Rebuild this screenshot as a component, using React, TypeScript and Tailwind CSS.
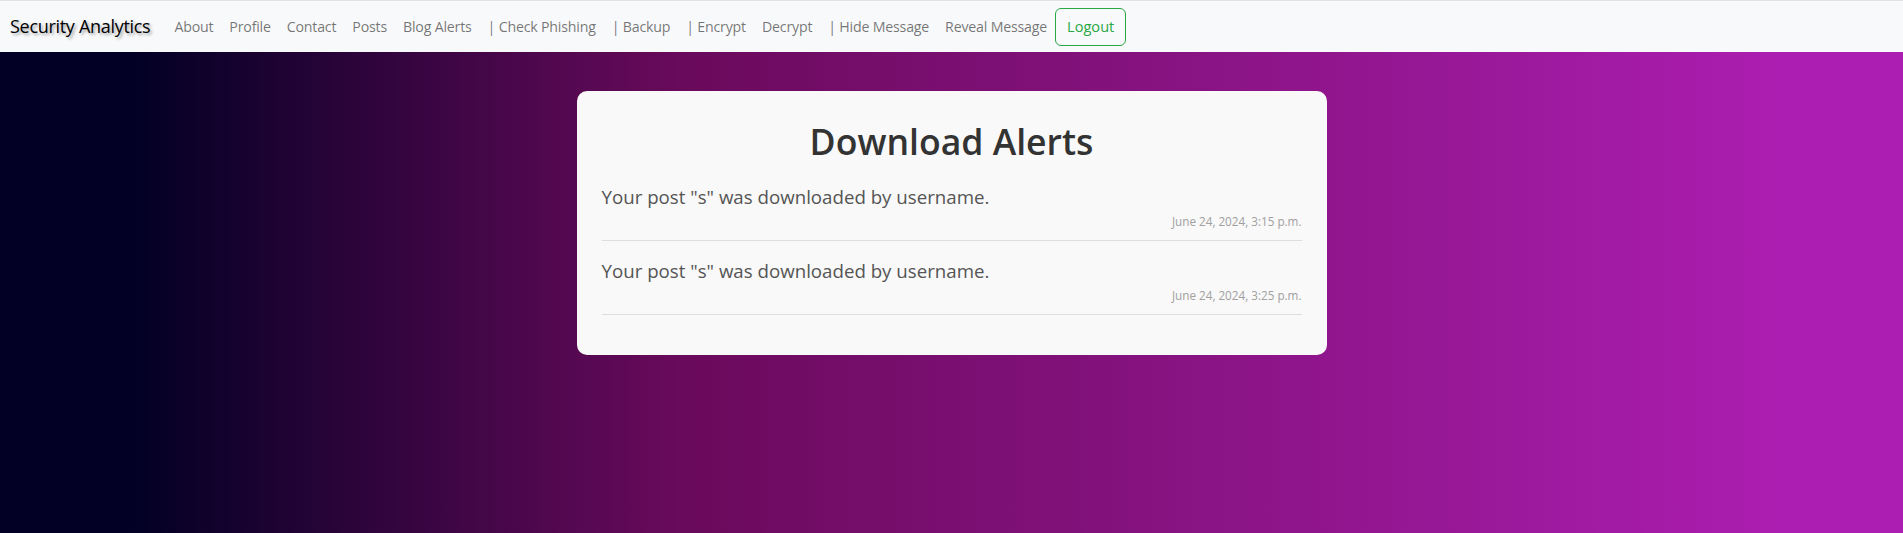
import React from 'react';

const links = [
  'About',
  'Profile',
  'Contact',
  'Posts',
  'Blog Alerts',
  '| Check Phishing',
  '| Backup',
  '| Encrypt',
  'Decrypt',
  '| Hide Message',
  'Reveal Message',
];

const alerts = [
  { text: 'Your post "s" was downloaded by username.', time: 'June 24, 2024, 3:15 p.m.' },
  { text: 'Your post "s" was downloaded by username.', time: 'June 24, 2024, 3:25 p.m.' },
];

export default function App() {
  return (
    <div
      className="min-h-[533px] bg-[linear-gradient(to_right,#020024_7%,#6a0a5c_36%,#ac1eb1_94%)]"
      style={{ fontFamily: '"Open Sans", "Noto Sans", sans-serif' }}
    >
      {/* Navbar */}
      <nav className="h-[52px] bg-[#f8f9fa] border-t border-[#e2e2e2] flex items-center pl-[10px]">
        <span className="text-[18px] tracking-[-0.3px] text-black mr-4 [text-shadow:2px_2px_3px_rgba(0,0,0,0.35)]">
          Security Analytics
        </span>
        <div className="flex items-center">
          {links.map((l) => (
            <a key={l} href="#" className="px-2 text-[14.2px] tracking-[-0.2px] leading-6 text-black/55 whitespace-nowrap">
              {l}
            </a>
          ))}
          <button className="h-[38px] px-[11px] rounded-md border border-[#28a745] text-[#28a745] text-[14.6px]">
            Logout
          </button>
        </div>
      </nav>

      {/* Alerts card */}
      <div className="w-[750px] mx-auto mt-[39px] bg-[#f9f9f9] rounded-[10px] px-[25px] pt-[26px] pb-10">
        <h1 className="text-center text-[35.6px] leading-[48px] font-semibold text-[#333]">Download Alerts</h1>
        <ul className="mt-[2px]">
          {alerts.map((a, i) => (
            <li key={i} className="pt-[15px] pb-[10px] border-b border-[#dedede]">
              <p className="text-[18.7px] leading-[30px] text-[#555]">{a.text}</p>
              <p className="text-right text-[11.7px] leading-[18px] text-[#a0a0a0]">{a.time}</p>
            </li>
          ))}
        </ul>
      </div>
    </div>
  );
}
